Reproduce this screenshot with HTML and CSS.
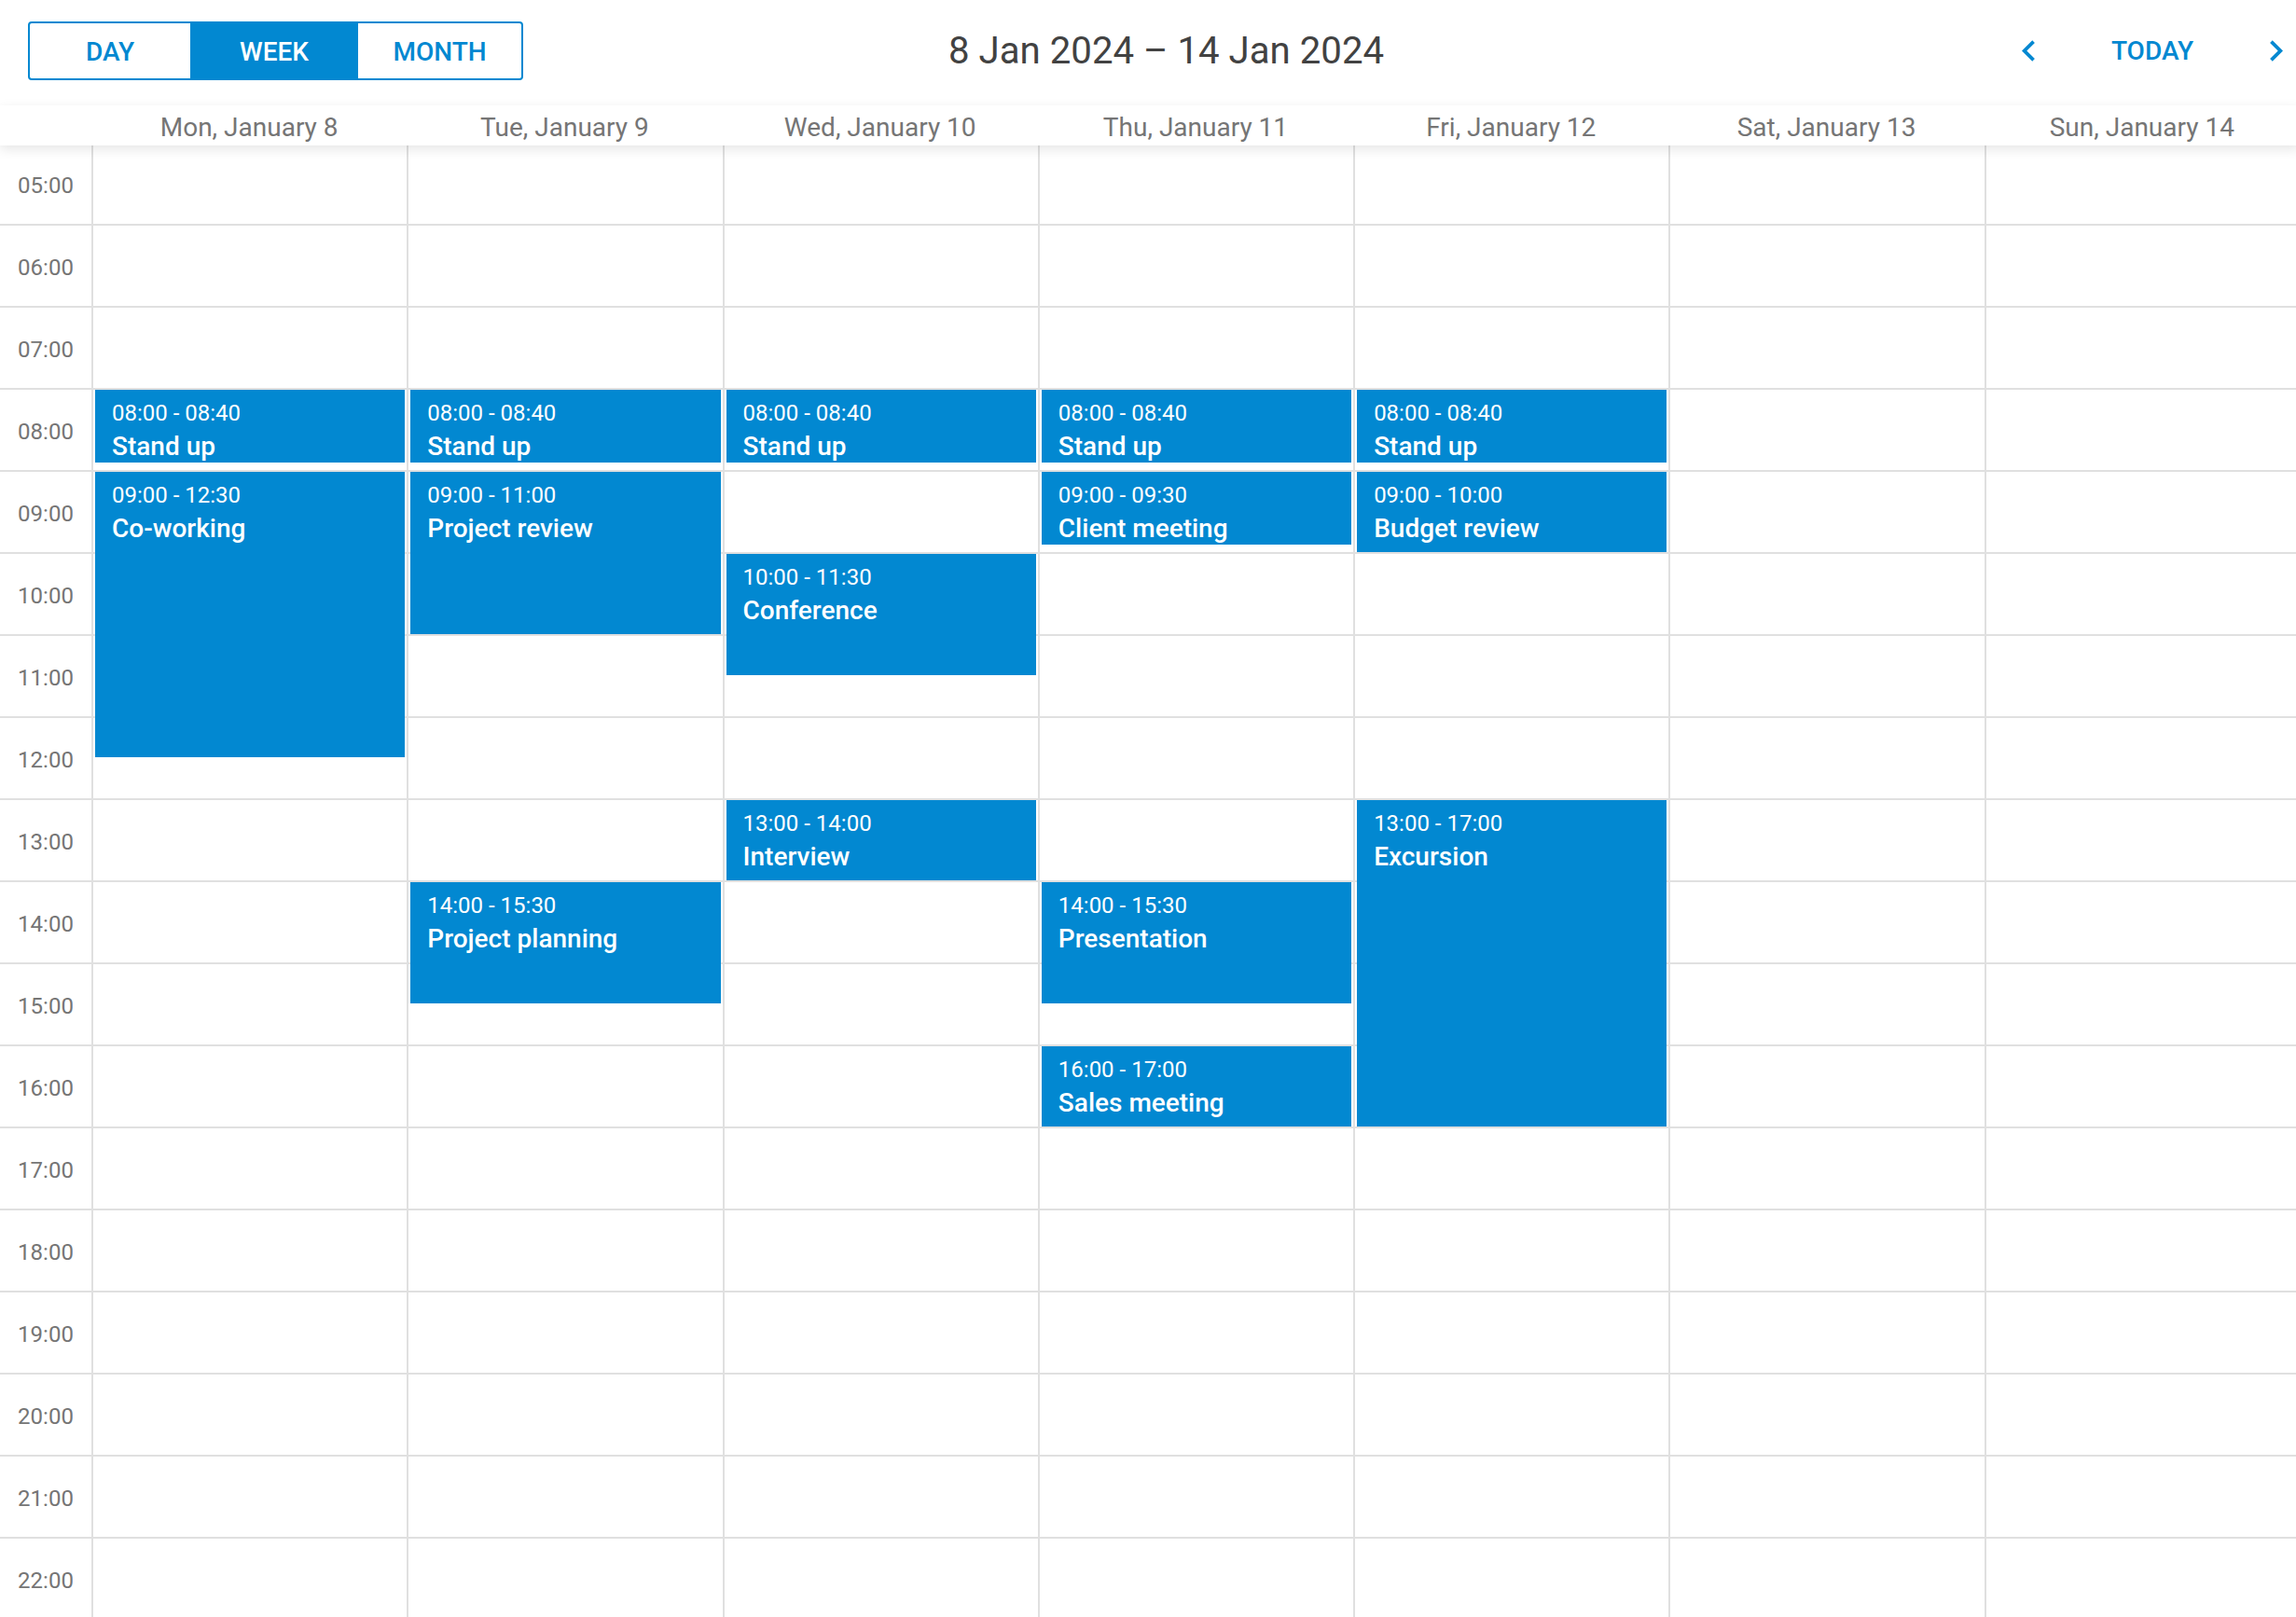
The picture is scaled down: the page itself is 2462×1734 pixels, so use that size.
FILE: index.html
```html
<!DOCTYPE html>
<html lang="en">
<head>
<meta charset="utf-8">
<title>Week calendar</title>
<link rel="stylesheet" href="styles.css">
</head>
<body>
<div class="calendar">
  <div class="toolbar">
    <div class="views">
      <button class="view view-day">DAY</button>
      <button class="view view-week is-active">WEEK</button>
      <button class="view view-month">MONTH</button>
    </div>
    <div class="range">8 Jan 2024 – 14 Jan 2024</div>
    <div class="nav">
      <button class="icon-btn" aria-label="Previous">
        <svg viewBox="0 0 24 24" width="45" height="45"><path d="M15.41 7.41L14 6l-6 6 6 6 1.41-1.41L10.83 12z"/></svg>
      </button>
      <button class="today">TODAY</button>
      <button class="icon-btn" aria-label="Next">
        <svg viewBox="0 0 24 24" width="45" height="45"><path d="M10 6L8.59 7.41 13.17 12l-4.58 4.59L10 18l6-6z"/></svg>
      </button>
    </div>
  </div>

  <div class="day-header">
    <div class="corner"></div>
    <div class="day-name">Mon, January 8</div>
    <div class="day-name">Tue, January 9</div>
    <div class="day-name">Wed, January 10</div>
    <div class="day-name">Thu, January 11</div>
    <div class="day-name">Fri, January 12</div>
    <div class="day-name">Sat, January 13</div>
    <div class="day-name">Sun, January 14</div>
  </div>

  <div class="grid">
    <div class="hours">
      <div class="hour">05:00</div>
      <div class="hour">06:00</div>
      <div class="hour">07:00</div>
      <div class="hour">08:00</div>
      <div class="hour">09:00</div>
      <div class="hour">10:00</div>
      <div class="hour">11:00</div>
      <div class="hour">12:00</div>
      <div class="hour">13:00</div>
      <div class="hour">14:00</div>
      <div class="hour">15:00</div>
      <div class="hour">16:00</div>
      <div class="hour">17:00</div>
      <div class="hour">18:00</div>
      <div class="hour">19:00</div>
      <div class="hour">20:00</div>
      <div class="hour">21:00</div>
      <div class="hour">22:00</div>
    </div>

    <div class="day">
      <div class="event" style="top:266px;height:78px"><div class="ev-time">08:00 - 08:40</div><div class="ev-title">Stand up</div></div>
      <div class="event" style="top:354px;height:306px"><div class="ev-time">09:00 - 12:30</div><div class="ev-title">Co-working</div></div>
    </div>

    <div class="day">
      <div class="event" style="top:266px;height:78px"><div class="ev-time">08:00 - 08:40</div><div class="ev-title">Stand up</div></div>
      <div class="event" style="top:354px;height:174px"><div class="ev-time">09:00 - 11:00</div><div class="ev-title">Project review</div></div>
      <div class="event" style="top:794px;height:130px"><div class="ev-time">14:00 - 15:30</div><div class="ev-title">Project planning</div></div>
    </div>

    <div class="day">
      <div class="event" style="top:266px;height:78px"><div class="ev-time">08:00 - 08:40</div><div class="ev-title">Stand up</div></div>
      <div class="event" style="top:442px;height:130px"><div class="ev-time">10:00 - 11:30</div><div class="ev-title">Conference</div></div>
      <div class="event" style="top:706px;height:86px"><div class="ev-time">13:00 - 14:00</div><div class="ev-title">Interview</div></div>
    </div>

    <div class="day">
      <div class="event" style="top:266px;height:78px"><div class="ev-time">08:00 - 08:40</div><div class="ev-title">Stand up</div></div>
      <div class="event" style="top:354px;height:78px"><div class="ev-time">09:00 - 09:30</div><div class="ev-title">Client meeting</div></div>
      <div class="event" style="top:794px;height:130px"><div class="ev-time">14:00 - 15:30</div><div class="ev-title">Presentation</div></div>
      <div class="event" style="top:970px;height:86px"><div class="ev-time">16:00 - 17:00</div><div class="ev-title">Sales meeting</div></div>
    </div>

    <div class="day">
      <div class="event" style="top:266px;height:78px"><div class="ev-time">08:00 - 08:40</div><div class="ev-title">Stand up</div></div>
      <div class="event" style="top:354px;height:86px"><div class="ev-time">09:00 - 10:00</div><div class="ev-title">Budget review</div></div>
      <div class="event" style="top:706px;height:350px"><div class="ev-time">13:00 - 17:00</div><div class="ev-title">Excursion</div></div>
    </div>

    <div class="day"></div>
    <div class="day"></div>
  </div>
</div>
</body>
</html>
```

FILE: styles.css
```css
* {
  box-sizing: border-box;
}

html, body {
  margin: 0;
  padding: 0;
  background: #ffffff;
  overflow: hidden;
}

body {
  font-family: Roboto, "Noto Sans", "Liberation Sans", sans-serif;
  color: #424242;
}

button {
  font-family: inherit;
  border: none;
  background: none;
  margin: 0;
  padding: 0;
  cursor: pointer;
}

.calendar {
  width: 2466px;
}

/* ---------- toolbar ---------- */
.toolbar {
  height: 108px;
  display: flex;
  align-items: center;
  padding: 0 3px 0 30px;
}

.views {
  display: flex;
  height: 63px;
  border: 2px solid #0288d1;
  border-radius: 4px;
  overflow: hidden;
}

.view {
  height: 100%;
  font-size: 28px;
  font-weight: 500;
  color: #0288d1;
  padding-top: 3px;
}

.view-day { width: 172px; }
.view-week { width: 180px; }
.view-month { width: 175px; }

.view.is-active {
  background: #0288d1;
  color: #ffffff;
}

.range {
  margin-left: 456px;
  font-size: 40.2px;
  font-weight: 400;
  color: #424242;
  white-space: nowrap;
}

.nav {
  margin-left: auto;
  display: flex;
  align-items: center;
  gap: 66px;
}

.icon-btn {
  display: flex;
  width: 45px;
  height: 45px;
}

.icon-btn svg {
  fill: #0288d1;
}

.today {
  font-size: 28px;
  font-weight: 500;
  color: #0288d1;
  padding-top: 1px;
}

/* ---------- day header ---------- */
.day-header {
  position: relative;
  z-index: 2;
  display: flex;
  height: 43px;
  margin-top: 5px;
  background: #ffffff;
  box-shadow: 0 4px 12px rgba(0, 0, 0, 0.1);
}

.corner {
  width: 98px;
  flex: none;
}

.day-name {
  flex: 1 1 0;
  display: flex;
  align-items: center;
  justify-content: center;
  padding-top: 4px;
  font-size: 28px;
  color: #757575;
  white-space: nowrap;
}

/* ---------- grid ---------- */
.grid {
  display: flex;
  margin-top: -4px;
  height: 1584px;
  background: repeating-linear-gradient(to bottom, #e0e0e0 0, #e0e0e0 2px, transparent 2px, transparent 88px);
}

.hours {
  width: 98px;
  flex: none;
}

.hour {
  height: 88px;
  display: flex;
  align-items: center;
  justify-content: center;
  padding-top: 6px;
  font-size: 24px;
  color: #757575;
}

.day {
  position: relative;
  flex: 1 1 0;
  border-left: 2px solid #e0e0e0;
}

.event {
  position: absolute;
  left: 2px;
  right: 2px;
  background: #0288d1;
  color: #ffffff;
  padding: 11px 18px 0;
  overflow: hidden;
}

.ev-time {
  font-size: 24px;
  font-weight: 400;
  white-space: nowrap;
}

.ev-title {
  margin-top: 5px;
  font-size: 28px;
  font-weight: 500;
  white-space: nowrap;
}
```
